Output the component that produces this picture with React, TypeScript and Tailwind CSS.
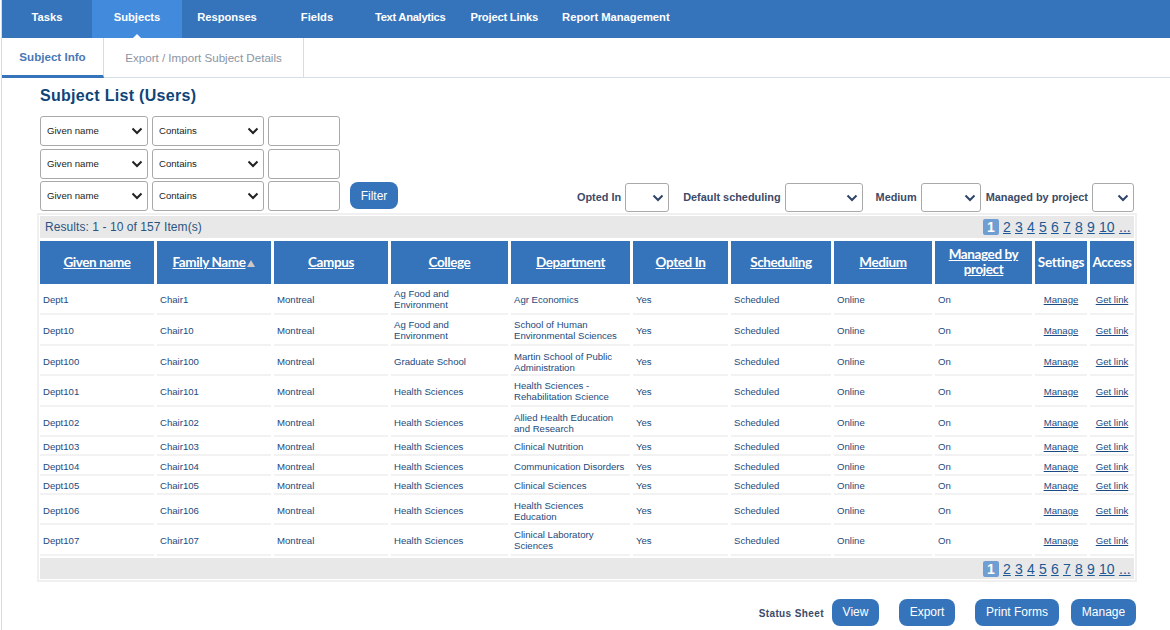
import React from 'react';

const rows = [
  ['Dept1', 'Chair1', 'Ag Food and Environment', 'Agr Economics', 'h-[31px]'],
  ['Dept10', 'Chair10', 'Ag Food and Environment', 'School of Human Environmental Sciences', 'h-[31px]'],
  ['Dept100', 'Chair100', 'Graduate School', 'Martin School of Public Administration', 'h-[30px] [&>td]:pt-[3px]'],
  ['Dept101', 'Chair101', 'Health Sciences', 'Health Sciences - Rehabilitation Science', 'h-[31px]'],
  ['Dept102', 'Chair102', 'Health Sciences', 'Allied Health Education and Research', 'h-[30px] [&>td]:pt-[3px]'],
  ['Dept103', 'Chair103', 'Health Sciences', 'Clinical Nutrition', 'h-[19px]'],
  ['Dept104', 'Chair104', 'Health Sciences', 'Communication Disorders', 'h-[20px] [&>td]:pt-[3px]'],
  ['Dept105', 'Chair105', 'Health Sciences', 'Clinical Sciences', 'h-[19px]'],
  ['Dept106', 'Chair106', 'Health Sciences', 'Health Sciences Education', 'h-[30px] [&>td]:pt-[3px]'],
  ['Dept107', 'Chair107', 'Health Sciences', 'Clinical Laboratory Sciences', 'h-[31px]'],
];

const headers = ['Given name', 'Family Name', 'Campus', 'College', 'Department', 'Opted In', 'Scheduling', 'Medium', 'Managed by project'];

function Chevron() {
  return (
    <svg width="12" height="8" viewBox="0 0 12 8" className="absolute right-[4px] top-1/2 -translate-y-1/2">
      <path d="M1.5 1.5 6 6l4.5-4.5" fill="none" stroke="currentColor" strokeWidth="2" />
    </svg>
  );
}

function FilterRow({ height, button }: { height: string; button?: boolean }) {
  return (
    <div className={`flex items-start gap-[4px] ${height}`}>
      <div className="relative w-[108px] h-[30px] border border-[#a9a9a9] rounded-[3px] pl-[6px] flex items-center text-[9.6px] text-[#222] bg-white">
        Given name
        <Chevron />
      </div>
      <div className="relative w-[112px] h-[30px] border border-[#a9a9a9] rounded-[3px] pl-[6px] flex items-center text-[9.6px] text-[#222] bg-white">
        Contains
        <Chevron />
      </div>
      <div className="w-[72px] h-[30px] border border-[#a9a9a9] rounded-[3px] bg-white" />
      {button && (
        <div className="ml-[6px] mt-[1px] w-[48px] h-[27px] rounded-[8px] bg-[#3574ba] text-white text-[12px] flex items-center justify-center">
          Filter
        </div>
      )}
    </div>
  );
}

function SmallSelect({ label, width, margin }: { label: string; width: string; margin: string }) {
  return (
    <div className={`flex items-center gap-[4px] ${margin}`}>
      <span className="text-[10.9px] font-bold text-[#3b4a68]">{label}</span>
      <div className={`relative ${width} h-[29px] border border-[#a9a9a9] rounded-[3px] text-[#2f4468] bg-white`}>
        <Chevron />
      </div>
    </div>
  );
}

function Pager() {
  return (
    <div className="flex items-center gap-[4px] text-[14px] text-[#1b5a96] leading-[16px]">
      <span className="w-[16px] h-[16px] rounded-[2px] bg-[#6f9fd2] text-white font-bold flex items-center justify-center">1</span>
      {['2', '3', '4', '5', '6', '7', '8', '9'].map((p) => (
        <span key={p} className="underline w-[8px]">{p}</span>
      ))}
      <span className="underline w-[16px]">10</span>
      <span className="underline w-[12px]">...</span>
    </div>
  );
}

const cell = 'border-b-2 border-[#f2f2f2] pl-[3px] pr-[5px] pt-[1px] text-[9.6px] leading-[11px] text-[#1d4a7c] font-normal align-middle';
const linkCell = 'border-b-2 border-[#f2f2f2] pt-[1px] text-[9.6px] leading-[11px] text-center underline text-[#1a4a80] align-middle';

export default function App() {
  return (
    <div className="w-[1169px] h-[630px] overflow-hidden bg-white font-['Liberation_Sans',sans-serif] border-l border-[#d5dbe3] ml-px">
      <div className="h-[38px] bg-[#3574ba] flex text-white text-[11.2px] font-bold">
        <div className="w-[90px] flex items-center justify-center pb-[3px]">Tasks</div>
        <div className="relative w-[90px] bg-[#428bdc] flex items-center justify-center pb-[3px]">
          Subjects
          <div className="absolute bottom-0 left-[41px] w-0 h-0 border-x-[4px] border-x-transparent border-b-[4px] border-b-white" />
        </div>
        <div className="w-[90px] flex items-center justify-center pb-[3px]">Responses</div>
        <div className="w-[90px] flex items-center justify-center pb-[3px]">Fields</div>
        <div className="flex items-center pb-[3px] gap-[25px] pl-[13px]">
          <span className="tracking-[-0.3px]">Text Analytics</span>
          <span className="tracking-[-0.2px]">Project Links</span>
          <span className="-ml-[1px]">Report Management</span>
        </div>
      </div>

      <div className="h-[40px] flex border-b border-[#d5dde6] text-[11.6px] font-bold">
        <div className="w-[102px] border-b-[3px] border-[#3574ba] border-r border-r-[#d5dde6] -mb-px flex items-center justify-center text-[#4a78b5]">
          Subject Info
        </div>
        <div className="w-[200px] border-r border-[#d5dde6] flex items-center justify-center text-[#8b95a3] font-normal">
          Export / Import Subject Details
        </div>
      </div>

      <div className="pl-[38px] w-[1132px]">
        <h1 className="text-[16px] leading-[20px] font-bold text-[#0f4478] tracking-[0.3px] mt-[8px] mb-[10px]">Subject List (Users)</h1>
        <div className="flex items-end justify-between h-[95px] mb-[2px]">
          <div className="flex flex-col">
            <FilterRow height="h-[33px]" />
            <FilterRow height="h-[32px]" />
            <FilterRow height="h-[30px]" button />
          </div>
          <div className="flex items-center h-[29px] -mb-px">
            <SmallSelect label="Opted In" width="w-[44px]" margin="" />
            <SmallSelect label="Default scheduling" width="w-[78px]" margin="ml-[14px]" />
            <SmallSelect label="Medium" width="w-[60px]" margin="ml-[13px]" />
            <SmallSelect label="Managed by project" width="w-[42px]" margin="ml-[5px]" />
          </div>
        </div>

        <div className="border-2 border-[#f0f0f0] -ml-[3px] pl-[1px] w-[1100px] pt-[1px] pb-[1px]">
          <div className="h-[22px] bg-[#e8e8e8] flex items-center justify-between pl-[5px] pr-[3px] w-[1094px]">
            <span className="text-[12px] tracking-[0.07px] text-[#2b5480]">Results: 1 - 10 of 157 Item(s)</span>
            <Pager />
          </div>
          <table className="table-fixed border-separate border-spacing-x-[3px] border-spacing-y-0 -ml-[3px] w-[1100px] mt-[3px]">
            <colgroup>
              <col className="w-[114px]" />
              <col className="w-[114px]" />
              <col className="w-[114px]" />
              <col className="w-[117px]" />
              <col className="w-[119px]" />
              <col className="w-[95px]" />
              <col className="w-[100px]" />
              <col className="w-[98px]" />
              <col className="w-[97px]" />
              <col className="w-[52px]" />
              <col className="w-[44px]" />
            </colgroup>
            <thead>
              <tr className="h-[43px]">
                {headers.map((h) => (
                  <th key={h} className="bg-[#3574ba] text-white text-[13.5px] leading-[15px] tracking-[-0.4px] font-bold font-['Lato',sans-serif] align-middle pb-[1px]">
                    <span className="underline">{h}</span>
                    {h === 'Family Name' && (
                      <span className="inline-block ml-[2px] w-0 h-0 border-x-[4px] border-x-transparent border-b-[7px] border-b-[#d0c6c6]" />
                    )}
                  </th>
                ))}
                <th className="bg-[#3574ba] text-white text-[13.5px] font-bold font-['Lato',sans-serif] tracking-[-0.3px] pb-[1px]">Settings</th>
                <th className="bg-[#3574ba] text-white text-[13.5px] font-bold font-['Lato',sans-serif] tracking-[-0.3px] pb-[1px]">Access</th>
              </tr>
            </thead>
            <tbody>
              {rows.map((r) => (
                <tr key={r[0]} className={r[4]}>
                  <td className={cell}>{r[0]}</td>
                  <td className={cell}>{r[1]}</td>
                  <td className={cell}>Montreal</td>
                  <td className={cell}>{r[2]}</td>
                  <td className={cell}>{r[3]}</td>
                  <td className={cell}>Yes</td>
                  <td className={cell}>Scheduled</td>
                  <td className={cell}>Online</td>
                  <td className={cell}>On</td>
                  <td className={linkCell}>Manage</td>
                  <td className={linkCell}>Get link</td>
                </tr>
              ))}
            </tbody>
          </table>
          <div className="h-[21px] mt-[2px] bg-[#e8e8e8] flex items-center justify-end pr-[3px] w-[1094px]">
            <Pager />
          </div>
        </div>

        <div className="flex items-center justify-end mt-[17px] w-[1096px] text-white text-[12px]">
          <span className="text-[10px] font-bold text-[#3b4a68] tracking-[0.4px] mr-[8px] mt-[2px]">Status Sheet</span>
          <div className="w-[47px] h-[27px] pb-[1px] rounded-[8px] bg-[#3574ba] flex items-center justify-center">View</div>
          <div className="ml-[20px] w-[56px] h-[27px] pb-[1px] rounded-[8px] bg-[#3574ba] flex items-center justify-center">Export</div>
          <div className="ml-[20px] w-[84px] h-[27px] pb-[1px] rounded-[8px] bg-[#3574ba] flex items-center justify-center">Print Forms</div>
          <div className="ml-[12px] w-[65px] h-[27px] pb-[1px] rounded-[8px] bg-[#3574ba] flex items-center justify-center">Manage</div>
        </div>
      </div>
    </div>
  );
}
